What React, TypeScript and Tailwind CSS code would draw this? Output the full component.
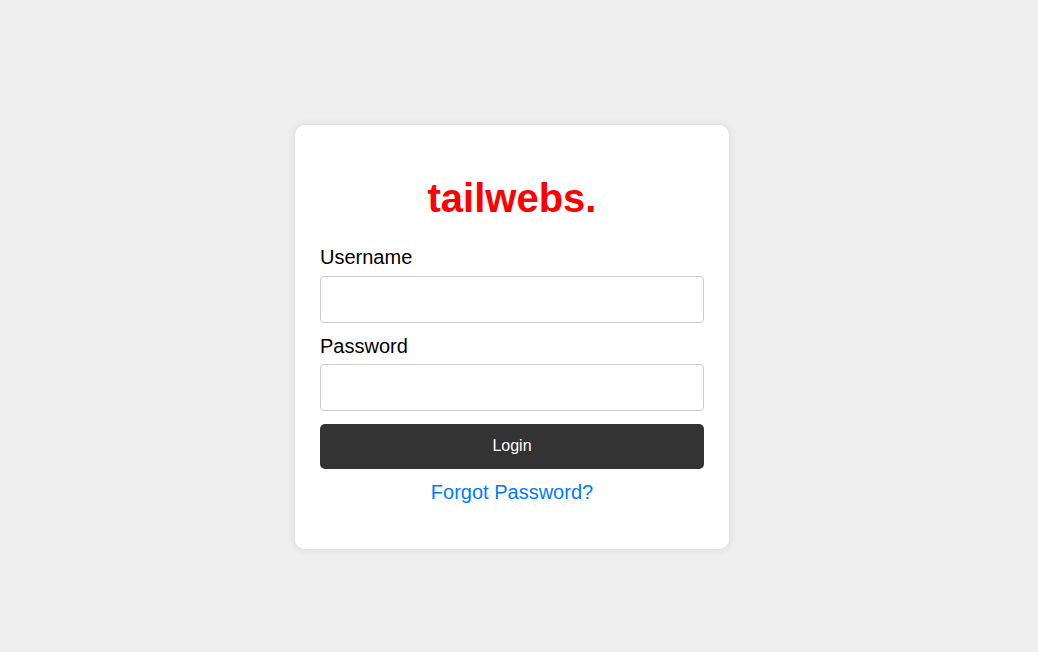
export default function App() {
  return (
    <div
      className="min-h-screen w-full bg-[#efefef] flex justify-center items-start pt-[125px] pr-[14px]"
      style={{ fontFamily: '"Liberation Sans", Arial, sans-serif' }}
    >
      <div className="w-[434px] bg-white rounded-[10px] shadow-[0_0_10px_rgba(0,0,0,0.1)] px-[25px] pt-[50px] pb-[46px]">
        {/* logo */}
        <h1 className="text-center text-[40px] font-bold text-[#ff0000] leading-[46px]">tailwebs.</h1>

        <form className="mt-[26px] flex flex-col" onSubmit={e => e.preventDefault()}>
          <label className="text-[20px] leading-[21px] text-black">Username</label>
          <input
            type="text"
            className="mt-[8px] h-[47px] w-full rounded-[4px] border border-[#cccccc] px-3 outline-none"
          />

          <label className="mt-[13px] text-[20px] leading-[21px] text-black">Password</label>
          <input
            type="password"
            className="mt-[7px] h-[47px] w-full rounded-[4px] border border-[#cccccc] px-3 outline-none"
          />

          <button
            type="submit"
            className="mt-[13px] h-[45px] w-full rounded-[5px] bg-[#333333] text-white text-[16px] pb-[2px]"
          >
            Login
          </button>

          <a href="#" className="mt-[13px] text-center text-[20px] leading-[21px] text-[#007bff]">
            Forgot Password?
          </a>
        </form>
      </div>
    </div>
  );
}
